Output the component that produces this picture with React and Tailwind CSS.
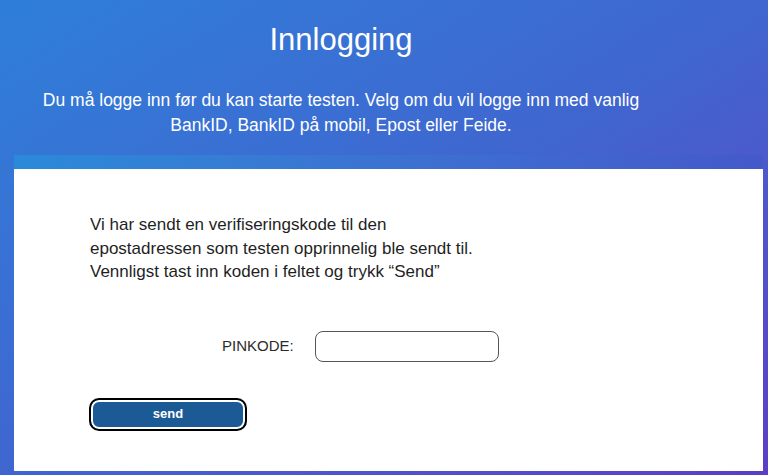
import React, { useState } from 'react'

export default function App() {
  const [pin, setPin] = useState('')

  return (
    <div
      className="min-h-[475px] w-full bg-gradient-to-br from-[#2d7fd9] via-[#3f66cf] to-[#5b3ec6] pb-1"
      style={{ fontFamily: '"Liberation Sans", Arial, sans-serif' }}
    >
      <div className="w-[682px] pt-5 text-center text-white">
        <h1 className="text-[31px] leading-[40px] font-normal">Innlogging</h1>
        <p className="mt-7 text-[17.5px] leading-[25px]">
          Du må logge inn før du kan starte testen. Velg om du vil logge inn med vanlig
          <br />
          BankID, BankID på mobil, Epost eller Feide.
        </p>
      </div>

      <div className="mt-[17px] ml-[14px] w-[749px]">
        <div className="h-[14px] bg-gradient-to-r from-[#2a8ad9] to-[#4459ca]" />
        <div className="h-[302px] bg-white pt-[44px] pl-[76px]">
          <p className="text-[17px] leading-[23.5px] text-[#1f1f1f]">
            Vi har sendt en verifiseringskode til den
            <br />
            epostadressen som testen opprinnelig ble sendt til.
            <br />
            Vennligst tast inn koden i feltet og trykk “Send”
          </p>

          <div className="mt-[47px] flex items-center pl-[132px]">
            <label className="text-[15px] text-[#2b2b2b]">PINKODE:</label>
            <input
              type="text"
              value={pin}
              onChange={(e) => setPin(e.target.value)}
              className="ml-[21px] h-[31px] w-[184px] rounded-[8px] border border-[#555] bg-white px-2 text-[14px] outline-none"
            />
          </div>

          <button
            type="button"
            className="mt-[36px] -ml-[1px] h-[33px] w-[158px] rounded-[10px] border-2 border-black bg-[#1c5a96] text-[13px] font-bold text-white shadow-[inset_0_0_0_2px_white]"
          >
            send
          </button>
        </div>
      </div>
    </div>
  )
}
